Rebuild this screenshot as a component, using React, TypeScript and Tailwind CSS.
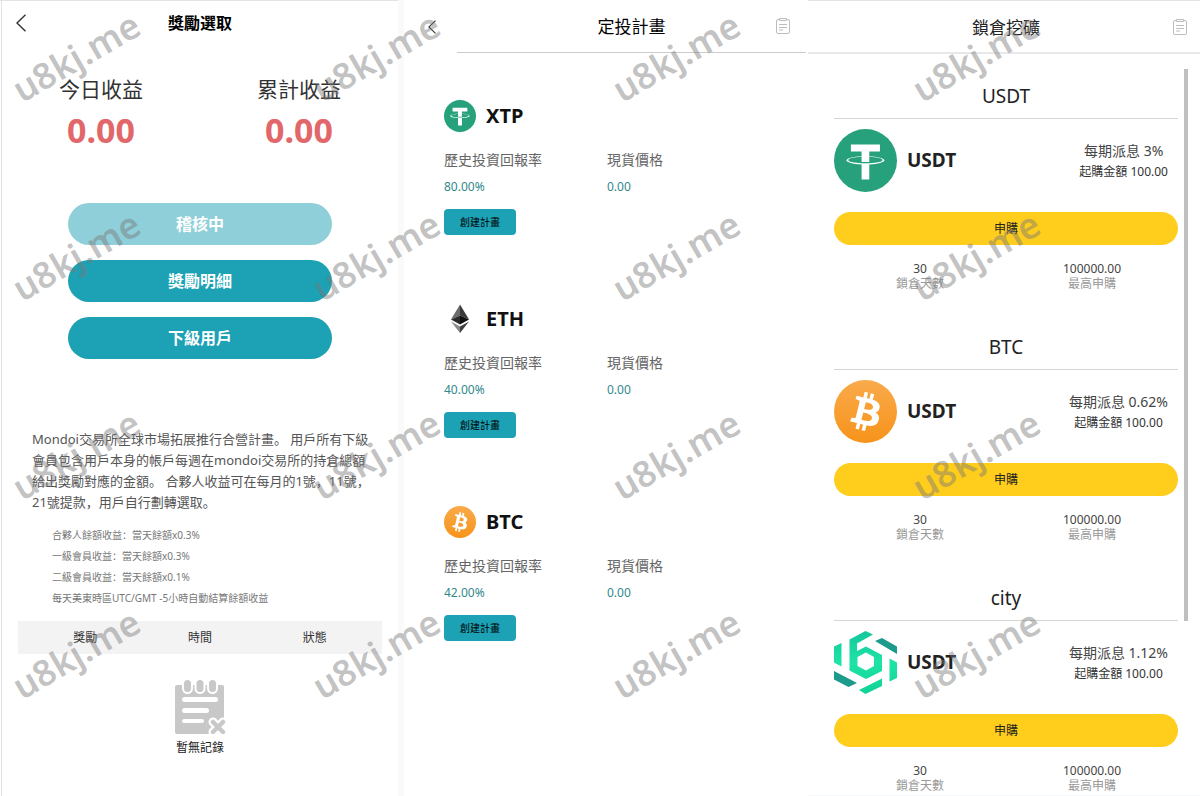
import React from "react";

function TetherIcon({ className }: { className: string }) {
  return (
    <svg viewBox="0 0 32 32" className={className} aria-hidden="true">
      <circle cx="16" cy="16" r="16" fill="#26a17b" />
      <path
        fill="#fff"
        d="M17.922 17.383v-.002c-.11.008-.677.042-1.942.042-1.01 0-1.721-.03-1.971-.042v.003c-3.888-.171-6.79-.848-6.79-1.658 0-.809 2.902-1.486 6.79-1.66v2.644c.254.018.982.061 1.988.061 1.207 0 1.812-.05 1.925-.06v-2.643c3.88.173 6.775.85 6.775 1.658 0 .81-2.895 1.485-6.775 1.657m0-3.59v-2.366h5.414V7.819H8.595v3.608h5.414v2.365c-4.4.202-7.709 1.074-7.709 2.118 0 1.044 3.309 1.915 7.709 2.118v7.582h3.913v-7.584c4.393-.202 7.694-1.073 7.694-2.116 0-1.043-3.301-1.914-7.694-2.117"
      />
    </svg>
  );
}

function BitcoinIcon({ className }: { className: string }) {
  return (
    <svg viewBox="0 0 32 32" className={className} aria-hidden="true">
      <defs>
        <linearGradient id="btc" x1="0" y1="0" x2="0" y2="1">
          <stop offset="0" stopColor="#f9aa4b" />
          <stop offset="1" stopColor="#f7931a" />
        </linearGradient>
      </defs>
      <circle cx="16" cy="16" r="16" fill="url(#btc)" />
      <path
        fill="#fff"
        d="M23.189 14.02c.314-2.096-1.283-3.223-3.465-3.975l.708-2.84-1.728-.43-.69 2.765c-.454-.114-.92-.22-1.385-.326l.695-2.783L15.596 6l-.708 2.839c-.376-.086-.746-.17-1.104-.26l.002-.009-2.384-.595-.46 1.846s1.283.294 1.256.312c.7.175.826.638.805 1.006l-.806 3.235c.048.012.11.03.18.057l-.183-.045-1.13 4.532c-.086.212-.303.531-.793.41.018.025-1.256-.313-1.256-.313l-.858 1.978 2.25.561c.418.105.828.215 1.231.318l-.715 2.872 1.727.43.708-2.84c.472.127.93.245 1.378.357l-.706 2.828 1.728.43.715-2.866c2.948.558 5.164.333 6.097-2.333.752-2.146-.037-3.385-1.588-4.192 1.13-.26 1.98-1.003 2.207-2.538zm-3.95 5.538c-.533 2.147-4.148.986-5.32.695l.95-3.805c1.172.293 4.929.872 4.37 3.11zm.535-5.569c-.487 1.953-3.495.96-4.47.717l.86-3.45c.975.243 4.118.696 3.61 2.733z"
      />
    </svg>
  );
}

function EthereumIcon({ className }: { className: string }) {
  return (
    <svg viewBox="0 0 32 32" className={className} aria-hidden="true">
      <path fill="#6b6b6b" d="M16 1.500 7 16.500l9-4z" />
      <path fill="#3a3a3a" d="M16 1.500l9 15-9-4z" />
      <path fill="#2b2b2b" d="M16 12.500l-9 4 9 5z" />
      <path fill="#101010" d="M16 12.500l9 4-9 5z" />
      <path fill="#8a8a8a" d="M7 18.500l9 5v6.500z" />
      <path fill="#3f3f3f" d="M25 18.500l-9 5v6.500z" />
    </svg>
  );
}

function CityIcon({ className }: { className: string }) {
  return (
    <svg viewBox="0 0 63 63" className={className} aria-hidden="true">
      <defs>
        <linearGradient id="cityBright" x1="0" y1="0" x2="0" y2="63" gradientUnits="userSpaceOnUse">
          <stop offset="0" stopColor="#14c79b" />
          <stop offset="0.5" stopColor="#1fe3a6" />
          <stop offset="1" stopColor="#10d294" />
        </linearGradient>
      </defs>
      <g fill="url(#cityBright)">
        <path
          fillRule="evenodd"
          d="M15.500 8.500 31.500 0 39 3.500 23 12.500V20l9-4.500L48 24v16l-16 8-16.500-8.500zM23.500 26v9l8.500 4.500 8-4.500v-9l-8-4.500z"
        />
        <path d="M0 15.500 7.500 12v23.500L0 31.500zM25 59l23-11.500V55l-16.500 8zM55.500 27.500l7.500 4V47l-7.500 3.500z" />
      </g>
      <path fill="#1c9b8c" d="M41 10l7-3 15 8.500v7.500zM0 40l23 12-8.500 4L0 48.500z" />
    </svg>
  );
}

function ClipboardIcon() {
  return (
    <svg viewBox="0 0 14 16" className="h-4 w-[14px]" fill="none" stroke="#bdbdbd" aria-hidden="true">
      <rect x="0.500" y="1.500" width="13" height="14" rx="1.500" />
      <path fill="#fff" d="M3.500.500h7v2h-7z" />
      <path d="M3 6.500h8M3 9.500h8M3 12h4" />
    </svg>
  );
}

function Chevron({ className }: { className: string }) {
  return (
    <svg viewBox="0 0 10 18" className={className} fill="none" stroke="#333" strokeWidth="1.400" aria-hidden="true">
      <path d="M9.500 .700 1 9l8.500 8.300" />
    </svg>
  );
}

function EmptyIcon() {
  return (
    <svg viewBox="0 0 51 54" className="h-[54px] w-[51px]" aria-hidden="true">
      <path fill="#c8c8c8" d="M0 7a2 2 0 0 1 2-2h45a2 2 0 0 1 2 2v45a2 2 0 0 1-2 2H2a2 2 0 0 1-2-2z" />
      <g fill="#c8c8c8" stroke="#fff" strokeWidth="2">
        <rect x="8" y="-1" width="9" height="14" rx="4.500" />
        <rect x="20.500" y="-1" width="9" height="14" rx="4.500" />
        <rect x="33" y="-1" width="9" height="14" rx="4.500" />
      </g>
      <g fill="#fff">
        <rect x="7" y="17" width="36" height="5" rx="2.500" />
        <rect x="7" y="28" width="27" height="5" rx="2.500" />
        <rect x="7" y="39" width="22" height="4" rx="2" />
      </g>
      <path d="M38 42l10 10M48 42L38 52" stroke="#fff" strokeWidth="9" strokeLinecap="round" />
      <path d="M38 42l10 10M48 42L38 52" stroke="#c8c8c8" strokeWidth="4.500" strokeLinecap="round" />
    </svg>
  );
}

function RewardsPanel() {
  return (
    <section className="border-r-[6px] border-[#fafafa] bg-white">
      <div className="min-h-screen border-t border-t-[#e3e3e3] pl-px">
        <div className="min-h-screen border-l border-[#e3e3e3]">
          <header className="grid h-11 grid-cols-3 items-center pl-[14px]">
            <button type="button" aria-label="返回" className="justify-self-start">
              <Chevron className="h-[18px] w-[10px]" />
            </button>
            <h1 className="-ml-[14px] text-center text-base font-bold text-black">獎勵選取</h1>
          </header>
          <dl className="mt-[31px] grid grid-cols-2 text-center">
            {["今日收益", "累計收益"].map((label) => (
              <div key={label}>
                <dt className="text-[21px] leading-[26px] text-[#333]">{label}</dt>
                <dd className="mt-2 text-[34px] leading-10 font-bold text-[#e2676a]">0.00</dd>
              </div>
            ))}
          </dl>
          <div className="mx-auto mt-[53px] flex w-2/3 flex-col gap-[15px] text-base font-bold text-white">
            <button type="button" disabled className="h-[42px] rounded-full bg-[#8ecfd9]">稽核中</button>
            <button type="button" className="h-[42px] rounded-full bg-[#1da1b4]">獎勵明細</button>
            <button type="button" className="h-[42px] rounded-full bg-[#1da1b4]">下級用戶</button>
          </div>
          <p className="mt-[70px] pl-[30px] text-[13px] leading-[21px] whitespace-nowrap text-[#555]">
            Mondoi交易所全球市場拓展推行合營計畫。 用戶所有下級
            <br />
            會員包含用戶本身的帳戶每週在mondoi交易所的持倉總額
            <br />
            給出獎勵對應的金額。 合夥人收益可在每月的1號，11號，
            <br />
            21號提款，用戶自行劃轉選取。
          </p>
          <ul className="mt-3 pl-[50px] text-[10px] leading-[21px] text-[#777]">
            <li>合夥人餘額收益：當天餘額x0.3%</li>
            <li>一級會員收益：當天餘額x0.3%</li>
            <li>二級會員收益：當天餘額x0.1%</li>
            <li>每天美東時區UTC/GMT -5小時自動結算餘額收益</li>
          </ul>
          <div className="mx-4 mt-3 bg-[#f3f3f4] px-[10px]">
            <table className="w-full table-fixed text-xs text-[#333]">
              <thead>
                <tr className="h-[33px]">
                  <th className="font-normal">獎勵</th>
                  <th className="font-normal">時間</th>
                  <th className="font-normal">狀態</th>
                </tr>
              </thead>
            </table>
          </div>
          <div className="mt-[26px] flex flex-col items-center gap-[5px]">
            <EmptyIcon />
            <p className="text-xs leading-[18px] text-[#222]">暫無記錄</p>
          </div>
        </div>
      </div>
    </section>
  );
}

const plans = [
  { name: "XTP", rate: "80.00%", Icon: TetherIcon },
  { name: "ETH", rate: "40.00%", Icon: EthereumIcon },
  { name: "BTC", rate: "42.00%", Icon: BitcoinIcon },
];

function PlansPanel() {
  return (
    <section className="bg-white">
      <header className="mr-[2px] flex h-[53px]">
        <div className="flex w-[53px] items-center pl-6">
          <button type="button" aria-label="返回">
            <Chevron className="h-[14px] w-2" />
          </button>
        </div>
        <div className="grid flex-1 grid-cols-[30px_1fr_30px] items-center border-b border-[#ccc]">
          <h2 className="col-start-2 pt-[2px] text-center text-[17px] leading-6 text-black">定投計畫</h2>
          <button type="button" aria-label="計畫記錄">
            <ClipboardIcon />
          </button>
        </div>
      </header>
      <div className="flex flex-col gap-[68px] pt-[47px] pr-[38px] pl-10">
        {plans.map(({ name, rate, Icon }) => (
          <article key={name}>
            <div className="flex h-8 items-center gap-[10px]">
              <Icon className="size-8" />
              <h3 className="text-xl font-bold text-[#111]">{name}</h3>
            </div>
            <dl className="mt-[18px] grid grid-cols-2">
              <div>
                <dt className="text-sm leading-5 text-[#666]">歷史投資回報率</dt>
                <dd className="mt-2 text-xs leading-[18px] text-[#33888c]">{rate}</dd>
              </div>
              <div>
                <dt className="text-sm leading-5 text-[#666]">現貨價格</dt>
                <dd className="mt-2 text-xs leading-[18px] text-[#33888c]">0.00</dd>
              </div>
            </dl>
            <button type="button" className="mt-[13px] block h-[26px] w-[72px] rounded-[4px] bg-[#1da1b4] text-[10px] text-black">
              創建計畫
            </button>
          </article>
        ))}
      </div>
    </section>
  );
}

const pools = [
  { name: "USDT", rate: "3%", Icon: TetherIcon },
  { name: "BTC", rate: "0.62%", Icon: BitcoinIcon },
  { name: "city", rate: "1.12%", Icon: CityIcon },
];

function MiningPanel() {
  return (
    <section className="border-b-2 border-[#f7f8fa] bg-white">
      <header className="grid h-[54px] grid-cols-[32px_1fr_32px] items-center border-t border-b-2 border-t-[#e3e3e3] border-b-[#e8e8e8] pl-1">
        <h2 className="col-start-2 pt-[2px] text-center text-[17px] leading-6 text-[#222]">鎖倉挖礦</h2>
        <button type="button" aria-label="挖礦記錄" className="justify-self-end pr-[13px]">
          <ClipboardIcon />
        </button>
      </header>
      <div className="relative">
        <div className="absolute top-[15px] right-3 h-[552px] w-1 bg-[#bfbfbf]" />
        <div className="flex flex-col gap-[34px] pt-5 pr-[22px] pl-[26px]">
          {pools.map(({ name, rate, Icon }) => (
            <article key={name}>
              <h3 className="border-b border-[#d5d5d5] text-center text-[19px] leading-[44px] text-[#222]">{name}</h3>
              <div className="flex items-center pt-[10px] pr-[10px]">
                <Icon className="size-[63px]" />
                <p className="ml-[10px] text-[19px] font-bold text-[#222]">USDT</p>
                <div className="ml-auto text-center text-[#444]">
                  <p className="text-sm leading-[22px]">每期派息 {rate}</p>
                  <p className="text-xs leading-5 text-[#333]">起購金額 100.00</p>
                </div>
              </div>
              <button type="button" className="mt-5 block h-[33px] w-full rounded-full bg-[#ffcd1c] text-xs text-[#222]">
                申購
              </button>
              <dl className="mt-4 grid grid-cols-2 text-center text-xs leading-[15px]">
                <div className="flex flex-col-reverse">
                  <dt className="text-[#999]">鎖倉天數</dt>
                  <dd className="text-[#444]">30</dd>
                </div>
                <div className="flex flex-col-reverse">
                  <dt className="text-[#999]">最高申購</dt>
                  <dd className="text-[#444]">100000.00</dd>
                </div>
              </dl>
            </article>
          ))}
        </div>
      </div>
    </section>
  );
}

const marks = Array.from({ length: 16 }, (_, i) => i);

function Watermark() {
  return (
    <div
      aria-hidden="true"
      className="pointer-events-none absolute inset-0 grid auto-rows-[199px] grid-cols-4 overflow-hidden text-[36px] font-semibold text-[#787878]/45"
    >
      {marks.map((mark) => (
        <div key={mark} className="flex h-[114px] w-[152px] items-center justify-center">
          <span className="-rotate-30">u8kj.me</span>
        </div>
      ))}
    </div>
  );
}

export default function App() {
  return (
    <main className="relative grid min-h-screen grid-cols-[404fr_404fr_392fr] overflow-hidden bg-white font-['Noto_Sans','Noto_Sans_CJK_SC',sans-serif]">
      <RewardsPanel />
      <PlansPanel />
      <MiningPanel />
      <Watermark />
    </main>
  );
}
